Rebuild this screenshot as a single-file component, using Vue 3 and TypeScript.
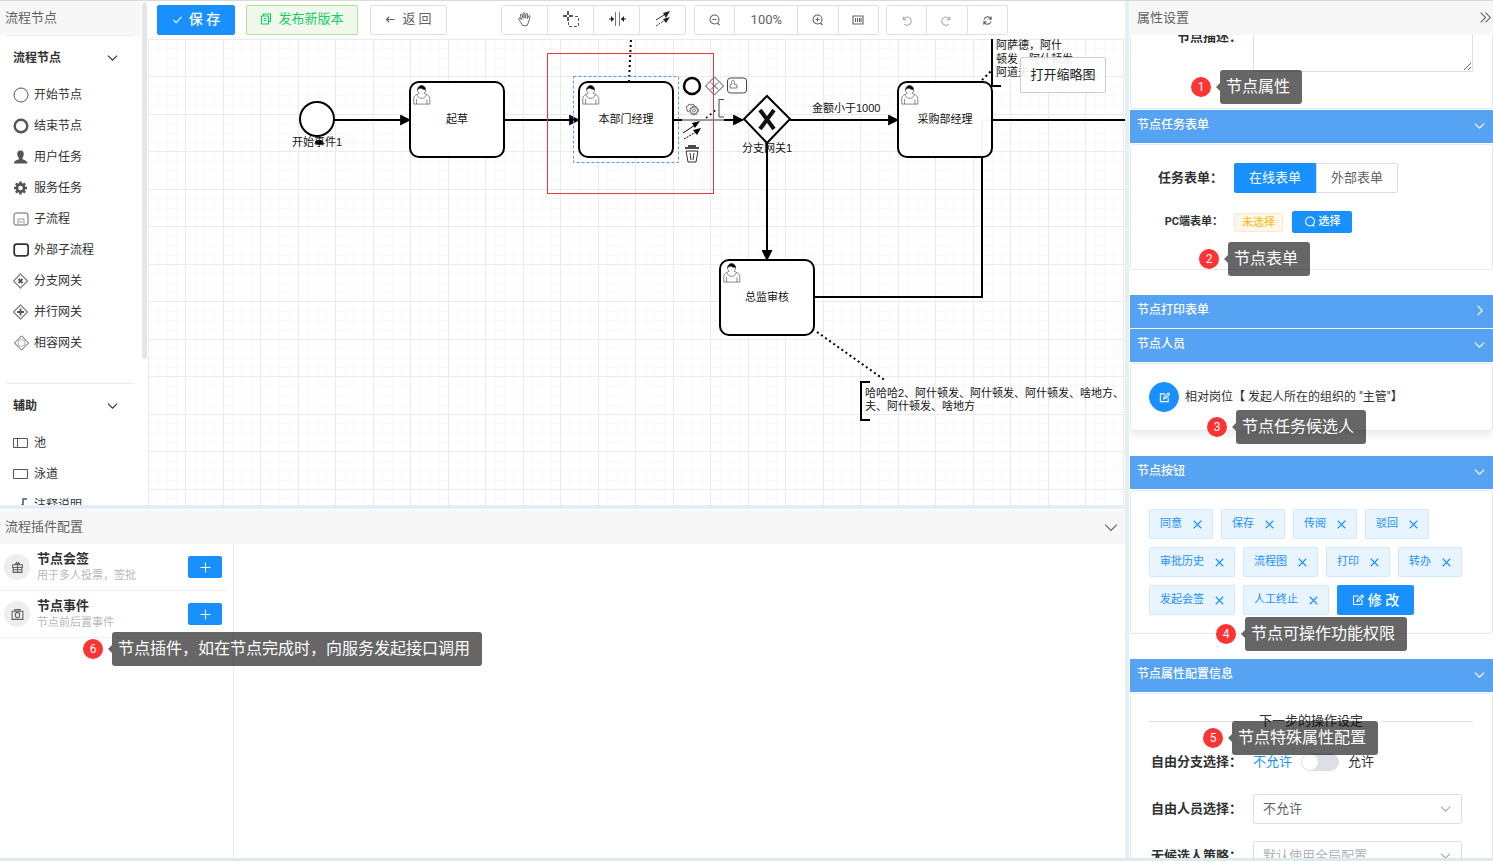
<script setup lang="ts">
import { h, onMounted, ref } from 'vue'

interface IconProps { name: string; size?: number }

// Outline icons on a 24 unit grid
const iconPaths: Record<string, string> = {
  check: 'M3 13l6 6L21 6',
  copy: 'M7 6V2h14v15h-4M3 6h14v16H3zM7 11h6M7 15h6',
  back: 'M21 12H3M9 6l-6 6 6 6',
  down: 'M2 8l10 10 10-10',
  right: 'M8 2l10 10-10 10',
  doubleRight: 'M3 3l9 9-9 9M12 3l9 9-9 9',
  zoomOut: 'M20 11a9 9 0 1 1-18 0a9 9 0 1 1 18 0M17 18l4 4M7 11h8',
  zoomIn: 'M20 11a9 9 0 1 1-18 0a9 9 0 1 1 18 0M17 18l4 4M7 11h8M11 7v8',
  fit: 'M2 4h20v16H2zM7 8v8M11 8v8M15 8v8M18 8v8',
  undo: 'M5 4v6h6M5 10a9 9 0 1 1 2 10',
  redo: 'M19 4v6h-6M19 10a9 9 0 1 0-2 10',
  refresh: 'M4 10a9 9 0 0 1 16-2M20 3v6h-6M20 14a9 9 0 0 1-16 2M4 21v-6h6',
  search: 'M21 11a9 9 0 1 1-18 0a9 9 0 1 1 18 0M17 18l4 3',
  edit: 'M13 4H3v17h17V12M10 15l1-4 9-9 3 3-9 9z',
  close: 'M2 2l20 20M22 2L2 22',
  plus: 'M12 1v22M1 12h22',
  gift: 'M3 7h18v5H3zM4 12v9h16v-9M12 7v14M4 16h16M7 7l3-4 2 4 2-4 3 4',
  camera: 'M2 6h20v15H2zM7 6V3h10v3M16 13a4 5 0 1 1-8 0a4 5 0 1 1 8 0',
}

const Icon = (props: IconProps) =>
  h('svg', {
    viewBox: '0 0 24 24', width: props.size ?? 12, height: props.size ?? 12,
    fill: 'none', stroke: 'currentColor', 'stroke-width': 26 / (props.size ?? 12), 'aria-hidden': 'true',
  }, [h('path', { d: iconPaths[props.name] })])
Icon.props = ['name', 'size']

const nodeItems = [
  { kind: 'start', text: '开始节点' },
  { kind: 'end', text: '结束节点' },
  { kind: 'user', text: '用户任务' },
  { kind: 'service', text: '服务任务' },
  { kind: 'sub', text: '子流程' },
  { kind: 'call', text: '外部子流程' },
  { kind: 'xor', text: '分支网关' },
  { kind: 'and', text: '并行网关' },
  { kind: 'or', text: '相容网关' },
]
const helperItems = [
  { kind: 'pool', text: '池' },
  { kind: 'lane', text: '泳道' },
  { kind: 'note', text: '注释说明' },
]
const groups = [
  { title: '流程节点', items: nodeItems },
  { title: '辅助', items: helperItems },
]

const tasks = [
  { x: 410, y: 82, text: '起草' },
  { x: 579, y: 82, text: '本部门经理' },
  { x: 898, y: 82, text: '采购部经理' },
  { x: 720, y: 260, text: '总监审核' },
]

const plugins = [
  { icon: 'gift', title: '节点会签', desc: '用于多人投票，签批' },
  { icon: 'camera', title: '节点事件', desc: '节点前后置事件' },
]

const actions = ['同意', '保存', '传阅', '驳回', '审批历史', '流程图', '打印', '转办', '发起会签', '人工终止']

interface Note { no: number; text: string; left: number; top: number }
const panelNotes: Note[] = [
  { no: 1, text: '节点属性', left: 61, top: 69 },
  { no: 2, text: '节点表单', left: 69, top: 241 },
  { no: 3, text: '节点任务候选人', left: 77, top: 409 },
  { no: 4, text: '节点可操作功能权限', left: 86, top: 616 },
  { no: 5, text: '节点特殊属性配置', left: 73, top: 720 },
]

const formType = ref('online')
const freeBranch = ref(false)
const freeUser = ref('不允许')
const fallback = ref('默认使用全局配置')
const description = ref('')

const panelScroll = ref<HTMLElement | null>(null)
onMounted(() => {
  if (panelScroll.value) panelScroll.value.scrollTop = 32
})
</script>

<template>
  <div class="page">
    <div class="main">
      <div class="left">
        <div class="designer">
          <nav class="palette">
            <h2 class="bar">流程节点</h2>
            <div class="thumb"></div>
            <section v-for="g in groups" :key="g.title" class="group">
              <h3>{{ g.title }}<Icon name="down" :size="11" /></h3>
              <ul>
                <li v-for="it in g.items" :key="it.text">
                  <svg class="shape" width="16" height="16" viewBox="0 0 16 16" fill="none" stroke="#555">
                    <circle v-if="it.kind === 'start'" cx="8" cy="8" r="7" />
                    <circle v-else-if="it.kind === 'end'" cx="8" cy="8" r="6.3" stroke-width="2.4" />
                    <path v-else-if="it.kind === 'user'" stroke="none" fill="#555" d="M7.5 1.500c2.600 0 3.600 2 3.200 4.500-.2 1.500-.9 2.300-1.200 2.900v1.400c2.200.8 4.800 1.500 5 4.200H.9c.2-2.700 2.800-3.400 5-4.200V8.900C5.300 8.300 4.500 7.500 4.300 6 3.900 3.500 5 1.500 7.500 1.500z" />
                    <g v-else-if="it.kind === 'service'">
                      <circle cx="7.500" cy="8" r="3.600" stroke-width="2.600" />
                      <path stroke-width="2.600" d="M7.500 1.500v2.500M7.500 12v2.500M1 8h2.500M11.500 8h2.500M2.900 3.400l1.800 1.800M10.300 10.800l1.800 1.800M2.900 12.600l1.800-1.800M10.300 5.200l1.800-1.800" />
                    </g>
                    <g v-else-if="it.kind === 'sub'">
                      <rect x="1" y="2" width="14" height="12" rx="2" stroke="#6a5a7a" />
                      <path d="M5 13V8h6v5M6 11h4" stroke="#999" />
                    </g>
                    <rect v-else-if="it.kind === 'call'" x="1.200" y="2.200" width="14" height="11.600" rx="2.500" stroke="#333" stroke-width="1.800" />
                    <g v-else-if="it.kind === 'xor'">
                      <path d="M7.500 1l7 7-7 7-7-7z" stroke="#888" stroke-width="1.400" /><path d="M5.500 6l4 4M9.500 6l-4 4" stroke-width="2" />
                    </g>
                    <g v-else-if="it.kind === 'and'">
                      <path d="M7.500 1l7 7-7 7-7-7z" stroke="#888" stroke-width="1.400" /><path d="M7.500 4.500v7M4 8h7" stroke-width="1.800" />
                    </g>
                    <g v-else-if="it.kind === 'or'">
                      <path d="M8.500 .8l7 7.200-7 7.200L1.500 8z" /><circle cx="8.500" cy="8" r="3.500" stroke="#aaa" />
                    </g>
                    <path v-else-if="it.kind === 'pool'" d="M.5 3.500h14v9H.5zM4.500 3.500v9" />
                    <path v-else-if="it.kind === 'lane'" d="M.5 3.500h14v9H.5z" />
                    <path v-else d="M14 2h-4v12M10 7l-7 7" stroke-width="1.500" />
                  </svg>
                  {{ it.text }}
                </li>
              </ul>
            </section>
          </nav>

          <div class="work">
            <div class="toolbar">
              <button class="btn primary save"><Icon name="check" :size="11" />保 存</button>
              <button class="btn publish"><Icon name="copy" />发布新版本</button>
              <button class="btn return"><Icon name="back" :size="11" />返 回</button>
              <div class="btn-group tools">
                <button aria-label="抓手">
                  <svg width="16" height="16" viewBox="0 0 18 18" fill="none" stroke="#555"><path d="M6.500 16.500C5 14 3 11 1.800 8.700c-.3-1 .8-1.600 1.600-.8L5.200 10 3.800 4.600c-.2-1.200 1.300-1.500 1.700-.4L7 8.200 6.800 2.700c0-1.300 1.600-1.300 1.800 0L9.200 8l1-4.700c.3-1.200 1.800-.9 1.700.3L11.500 8.600l1.600-3c.6-1 1.900-.3 1.500.7-.8 2.300-.8 5-1.800 7-.5 1-1.200 1.700-1.500 3.200z" /></svg>
                </button>
                <button aria-label="框选">
                  <svg width="18" height="18" viewBox="0 0 18 18" fill="none" stroke="#555"><path d="M6 1v4M6 7v4M1 6h4M7 6h4" stroke="#222" stroke-width="1.500" /><path d="M6.500 12v4.500h10V6.500H12" stroke-dasharray="3 2" /></svg>
                </button>
                <button aria-label="间距">
                  <svg width="18" height="18" viewBox="0 0 18 18" fill="none" stroke="#777"><path d="M7.500 2v14M11.500 2v14" /><path d="M1 9h5M13 9h5" stroke="#222" /><path d="M3 6l3 3-3 3zM16 6l-3 3 3 3z" fill="#222" stroke="none" /></svg>
                </button>
                <button aria-label="连线">
                  <svg width="18" height="18" viewBox="0 0 18 18" fill="none" stroke="#333"><path d="M2 10l8-5" /><path d="M2 16l9-6" stroke-dasharray="2 1" /><path d="M16 1L9 3l3 5zM16 7l-7 2 3 4z" fill="#222" stroke="none" /></svg>
                </button>
              </div>
              <div class="btn-group zoom">
                <button aria-label="缩小"><Icon name="zoomOut" /></button>
                <button class="percent">100%</button>
                <button aria-label="放大"><Icon name="zoomIn" /></button>
                <button aria-label="适应"><Icon name="fit" /></button>
              </div>
              <div class="btn-group history">
                <button aria-label="撤销" class="muted"><Icon name="undo" :size="11" /></button>
                <button aria-label="重做" class="muted"><Icon name="redo" :size="11" /></button>
                <button aria-label="重置"><Icon name="refresh" :size="11" /></button>
              </div>
            </div>

            <div class="canvas">
              <svg class="diagram" width="100%" height="100%">
                <defs>
                  <pattern id="grid" width="75" height="75" patternUnits="userSpaceOnUse">
                    <path d="M9 0h1v75h-1zM19 0h1v75h-1zM28 0h1v75h-1zM47 0h1v75h-1zM56 0h1v75h-1zM66 0h1v75h-1zM0 9h75v1H0zM0 19h75v1H0zM0 28h75v1H0zM0 47h75v1H0zM0 56h75v1H0zM0 66h75v1H0z" fill="#f8f8f8" />
                    <path d="M0 0h1v75H0zM37 0h1v75h-1zM0 0h75v1H0zM0 37h75v1H0z" fill="#ebebeb" />
                  </pattern>
                  <marker id="arrow" viewBox="0 0 10 10" refX="9" refY="5" markerWidth="11" markerHeight="11" markerUnits="userSpaceOnUse" orient="auto"><path d="M0 0l10 5-10 5z" /></marker>
                </defs>
                <rect width="100%" height="100%" fill="url(#grid)" />
                <g transform="translate(-148 -39)">
                  <g class="edge">
                    <path d="M334 120H410" marker-end="url(#arrow)" />
                    <path d="M504 120H579" marker-end="url(#arrow)" />
                    <path d="M673 120H682" />
                    <path d="M682 120H724" class="faded" />
                    <path d="M724 120H743" marker-end="url(#arrow)" />
                    <path d="M790 120H898" marker-end="url(#arrow)" />
                    <path d="M767 143V260" marker-end="url(#arrow)" />
                    <path d="M814 297H982V158" />
                    <path d="M992 120H2400" />
                  </g>
                  <g class="dots">
                    <path d="M629 82L631 38" /><path d="M982 80L991 71" /><path d="M817 332L886 381" />
                  </g>
                  <circle cx="317" cy="119" r="17" class="node" />
                  <text x="317" y="146" text-anchor="middle">开始事件1</text>
                  <ellipse cx="319" cy="142" rx="4" ry="2" />

                  <g v-for="t in tasks" :key="t.text" :transform="`translate(${t.x} ${t.y})`">
                    <rect width="94" height="75" rx="9" class="node" />
                    <text x="47" y="41" text-anchor="middle">{{ t.text }}</text>
                    <g transform="scale(.94)" class="person">
                      <path d="m15,12c0.909,-0.845 1.594,-2.049 1.594,-3.385 0,-2.554 -1.805,-4.622 -4.357,-4.622 -2.552,0 -4.288,2.068 -4.288,4.622 0,1.348 0.974,2.562 1.896,3.405 -0.529,0.187 -5.669,2.097 -5.794,4.756v6.718h17v-6.718c0,-2.298 -5.528,-4.595 -6.051,-4.776zm-8,6l0,5.500m11,0l0,-5" />
                      <path d="m15,12m2.162,1.009c0,2.447 -2.158,4.431 -4.821,4.431 -2.665,0 -4.822,-1.981 -4.822,-4.431" />
                      <path class="hair" d="m15,12m-6.900,-3.800c0,0 2.251,-2.358 4.274,-1.177 2.024,1.181 4.221,1.537 4.124,0.965 -0.098,-0.570 -0.117,-3.791 -4.191,-4.136 -3.572,0.001 -4.208,4.240 -4.208,4.348z" />
                    </g>
                  </g>
                  <path d="M982 156V120H991" stroke="#eee" fill="none" />

                  <path d="M767 96l23 23-23 24-23-24z" class="node" />
                  <path d="M760 110l14 19M774 110l-14 19" stroke="#111" stroke-width="4" />
                  <text x="767" y="152" text-anchor="middle">分支网关1</text>
                  <text x="812" y="112">金额小于1000</text>

                  <path d="M992 38V86H1001" class="bracket" />
                  <text x="996" y="49">阿萨德，阿什</text>
                  <text x="996" y="63">顿发，阿什顿发</text>
                  <text x="996" y="76">阿道夫</text>
                  <path d="M870 382H861V420H870" class="bracket" />
                  <text x="865" y="397">哈哈哈2、阿什顿发、阿什顿发、阿什顿发、啥地方、</text>
                  <text x="865" y="410">夫、阿什顿发、啥地方</text>

                  <rect x="573.500" y="76.500" width="105" height="86" class="selection" />
                  <g class="pad">
                    <circle cx="692" cy="86" r="8" stroke="#000" stroke-width="2.500" fill="#fff" />
                    <path d="M714.500 77l9 9-9 9-9-9zM711 82.500l7 7M718 82.500l-7 7" fill="none" />
                    <rect x="727.500" y="78" width="19" height="15" rx="3" fill="#fff" />
                    <path d="M730 88v-3l2-1c-2-5 4-5 2 0l3 1v3z" stroke-width=".7" />
                    <path d="M724 99.500h-5V117h5" /><path d="M706 118l11-9" stroke="#000" stroke-width="1.500" stroke-dasharray="2 3" />
                    <circle cx="694" cy="110.500" r="4.300" stroke-dasharray="2 1" /><circle cx="694" cy="110.500" r="3.500" stroke-width=".7" /><circle cx="694" cy="110.500" r="1.500" stroke-width=".7" />
                    <path d="M689 112l-2-1v-2l-1-2 2-1 1-2 2 1 2-1 2 2" stroke-width=".8" />
                    <path d="M683 133l12-8" stroke="#000" /><path d="M684 139l12-7" stroke="#000" stroke-dasharray="2 1" />
                    <path d="M700 121l-8 2 3 5zM701 128l-8 2 4 5z" fill="#000" stroke="none" />
                    <path d="M686 151h12l-2 11h-8zM690 153l1 7M694 153l-1 7" stroke="#333" />
                    <path d="M685 148h14M688 146h8" stroke="#111" stroke-width="1.500" />
                  </g>
                  <rect x="547.500" y="53.500" width="166" height="140" fill="none" stroke="#e5393e" />
                </g>
              </svg>
              <button class="minimap">打开缩略图</button>
            </div>
          </div>
        </div>

        <div class="split-h"></div>

        <section class="plugins">
          <h2 class="bar">流程插件配置<Icon name="down" :size="14" /></h2>
          <ul class="plugin-list">
            <li v-for="p in plugins" :key="p.title">
              <span class="avatar"><Icon :name="p.icon" :size="13" /></span>
              <div class="info"><strong>{{ p.title }}</strong><small>{{ p.desc }}</small></div>
              <button class="btn primary add" :aria-label="`添加${p.title}`"><Icon name="plus" :size="11" /></button>
            </li>
          </ul>
          <div class="note plugin-note"><b>6</b><span>节点插件，如在节点完成时，向服务发起接口调用</span></div>
        </section>
      </div>

      <div class="split-v"></div>

      <aside class="panel">
        <h2 class="bar">属性设置<Icon name="doubleRight" :size="13" /></h2>
        <div ref="panelScroll" class="scroll">
          <div class="card">
            <div class="row wide top">
              <label for="desc">节点描述：</label>
              <textarea id="desc" v-model="description"></textarea>
            </div>
          </div>

          <h3 class="head">节点任务表单<Icon name="down" :size="11" /></h3>
          <div class="card forms">
            <div class="row" role="radiogroup" aria-labelledby="form-type">
              <span id="form-type" class="label">任务表单：</span>
              <div class="radios">
                <input id="online" v-model="formType" type="radio" name="form" value="online" /><label for="online">在线表单</label>
                <input id="outer" v-model="formType" type="radio" name="form" value="outer" /><label for="outer">外部表单</label>
              </div>
            </div>
            <div class="row small">
              <span class="label">PC端表单：</span>
              <span class="warn">未选择</span>
              <button class="btn primary pick"><Icon name="search" />选择</button>
            </div>
          </div>

          <h3 class="head">节点打印表单<Icon name="right" :size="11" /></h3>
          <h3 class="head">节点人员<Icon name="down" :size="11" /></h3>
          <div class="card shadow person-row">
            <button class="btn primary round" aria-label="编辑人员"><Icon name="edit" :size="11" /></button>
            <span>相对岗位【 发起人所在的组织的 "主管"】</span>
          </div>

          <h3 class="head">节点按钮<Icon name="down" :size="11" /></h3>
          <div class="card tags">
            <span v-for="a in actions" :key="a" class="tag">{{ a }}<button :aria-label="`移除${a}`"><Icon name="close" :size="9" /></button></span>
            <button class="btn primary modify"><Icon name="edit" />修 改</button>
          </div>

          <h3 class="head">节点属性配置信息<Icon name="down" :size="11" /></h3>
          <div class="card config">
            <div class="divider">下一步的操作设定</div>
            <div class="row wide">
              <label for="branch">自由分支选择：</label>
              <div class="switch">
                <span :class="{ on: !freeBranch }">不允许</span>
                <input id="branch" v-model="freeBranch" type="checkbox" role="switch" />
                <span :class="{ on: freeBranch }">允许</span>
              </div>
            </div>
            <div class="row wide">
              <label for="free-user">自由人员选择：</label>
              <div class="select">
                <select id="free-user" v-model="freeUser"><option>不允许</option></select>
                <Icon name="down" :size="11" />
              </div>
            </div>
            <div class="row wide">
              <label for="fallback">无候选人策略：</label>
              <div class="select placeholder">
                <select id="fallback" v-model="fallback"><option>默认使用全局配置</option></select>
                <Icon name="down" :size="11" />
              </div>
            </div>
          </div>
        </div>
        <div v-for="n in panelNotes" :key="n.no" class="note" :style="{ left: n.left + 'px', top: n.top + 'px' }">
          <b>{{ n.no }}</b><span>{{ n.text }}</span>
        </div>
      </aside>
    </div>
    <div class="foot"></div>
  </div>
</template>

<style>
body { margin: 0; overflow: hidden; }
</style>

<style scoped>
* { box-sizing: border-box; }
.page { height: 100vh; display: flex; flex-direction: column; background: #fff; color: #303133; font: 13px/18px Roboto, "Noto Sans CJK SC", sans-serif; border-top: 1px solid #d9d9d9; }
.main { flex: 1; min-height: 0; display: flex; }
.left { flex: 1; min-width: 0; display: flex; flex-direction: column; }
.foot { height: 3px; background: #dcebea; }
.split-v { width: 4px; margin-right: 1px; background: #e5edf5; }
.split-h { height: 4px; background: #e5eef6; }
button, input, select, textarea { font: inherit; color: inherit; margin: 0; }
button { cursor: pointer; }
svg { flex: none; }
h2, h3, ul { margin: 0; padding: 0; font: inherit; list-style: none; }
.bar { display: flex; align-items: center; justify-content: space-between; height: 34px; flex: none; padding: 0 1px 1px 5px; background: #f7f7f7; color: #606266; font-size: 13px; }

.designer { flex: 504 1 0; min-height: 0; display: flex; }
.palette { position: relative; width: 148px; overflow: hidden; padding-right: 7px; }
.thumb { position: absolute; right: 1px; top: 1px; width: 5px; height: 357px; border-radius: 3px; background: #e6e6e6; }
.group { margin: 0 7px 25px 6px; border-top: 1px solid #e8eaf2; }
.group h3 { display: flex; align-items: center; justify-content: space-between; height: 43px; padding: 0 16px 0 7px; font-size: 12px; font-weight: 700; }
.group li { display: flex; align-items: center; gap: 5px; height: 31px; padding-left: 7px; font-size: 12px; white-space: nowrap; }

.work { flex: 1; min-width: 0; display: flex; flex-direction: column; }
.toolbar { display: flex; height: 38px; padding: 4px 0 0 9px; }
.btn { display: flex; align-items: center; justify-content: center; gap: 6px; height: 30px; padding: 0; border: 1px solid #dcdfe6; border-radius: 2px; background: #fff; color: #606266; white-space: nowrap; }
.btn.primary { background: #1890ff; border-color: #1890ff; color: #fff; }
.toolbar .btn { padding-bottom: 2px; }
.save { width: 78px; font-size: 14px; font-weight: 500; margin-right: 11px; }
.publish { width: 112px; margin-right: 12px; background: #f0f9eb; border-color: #b3e19d; color: #13ce66; }
.return { width: 77px; margin-right: 54px; }
.btn-group { display: flex; height: 30px; margin-right: 8px; border: 1px solid #dcdfe6; border-radius: 2px; }
.btn-group button { display: flex; align-items: center; justify-content: center; flex: 1; padding: 0; border: 0; background: #fff; color: #606266; }
.btn-group button + button { border-left: 1px solid #dcdfe6; }
.tools button { padding-bottom: 3px; }
.tools, .zoom { width: 185px; }
.btn-group.zoom { margin-right: 7px; }
.history { width: 122px; }
.btn-group .percent { flex: none; width: 63px; }
.btn-group .muted { color: #a8abb2; }

.canvas { position: relative; flex: 1; min-height: 0; overflow: hidden; }
.diagram { display: block; }
.diagram text { font: 11px "Liberation Sans", "Noto Sans CJK SC", sans-serif; fill: #111; }
.node { fill: #fff; stroke: #000; stroke-width: 2; }
.edge { fill: none; stroke: #000; stroke-width: 2; }
.faded { stroke: #999; }
.dots { fill: none; stroke: #000; stroke-width: 2; stroke-dasharray: 2 3; }
.bracket { fill: none; stroke: #000; stroke-width: 2; }
.person { fill: #fff; stroke: #333; stroke-width: .6; }
.hair { fill: #000; }
.selection { fill: none; stroke: #5c9bf5; stroke-dasharray: 3 2; }
.pad { fill: none; stroke: #444; }
.minimap { position: absolute; right: 19px; top: 18px; width: 86px; height: 36px; padding: 0; border: 1px solid #ccc; border-radius: 2px; background: rgba(255, 255, 255, .9); color: #222; }

.plugins { position: relative; flex: 348 1 0; min-height: 0; display: flex; flex-direction: column; margin-top: 1px; }
.plugins .bar { padding: 0 7px 1px 5px; }
.plugin-list { width: 234px; flex: 1; border-right: 1px solid #ebebeb; }
.plugin-list li { display: flex; align-items: center; height: 47px; margin-right: 7px; padding: 0 4px; border-bottom: 1px solid #f2f2f2; }
.avatar { display: flex; align-items: center; justify-content: center; width: 26px; height: 26px; border-radius: 50%; background: #eee; color: #606266; }
.info { flex: 1; padding-left: 7px; }
.info strong, .info small { display: block; line-height: 17px; }
.info small { font-size: 11px; color: #b8b8b8; }
.add { width: 34px; height: 22px; }

.note { position: absolute; display: flex; align-items: center; gap: 9px; white-space: nowrap; color: #fff; }
.note b { width: 20px; height: 20px; border-radius: 50%; background: #fc3434; font-size: 12px; line-height: 20px; font-weight: 400; text-align: center; }
.note span { position: relative; height: 34px; padding: 0 12px 0 6px; border-radius: 3px; background: rgba(0, 0, 0, .6); font-size: 16px; line-height: 34px; }
.note span::before { content: ""; position: absolute; left: -4px; top: 13px; border: 4px solid transparent; border-left: 0; border-right-color: #666; }
.plugin-note { left: 83px; top: 122px; }

.panel { position: relative; width: 363px; display: flex; flex-direction: column; }
.panel .bar { padding-left: 7px; }
.scroll { flex: 1; min-height: 0; overflow: hidden; }
.head { display: flex; align-items: center; justify-content: space-between; height: 33px; margin-bottom: 1px; padding: 0 8px 3px 7px; background: #57a3f3; color: #fff; font-size: 12px; font-weight: 500; }
.card { margin-bottom: 25px; padding: 18px 19px 18px 18px; border: 1px solid #e4e7ed; border-radius: 3px; }
.card:first-child { margin-bottom: 1px; padding-bottom: 36px; }
.forms { padding-bottom: 36px; }
.shadow { box-shadow: 0 4px 8px rgba(0, 0, 0, .08); }
.row { display: flex; align-items: center; min-height: 30px; }
.row > label, .label { width: 74px; margin-right: 11px; flex: none; font-weight: 700; text-align: right; white-space: nowrap; }
.row.wide > label { width: 93px; }
.row.top { align-items: flex-start; }
.row.top > label { line-height: 30px; }
.row textarea { flex: 1; min-width: 0; height: 50px; border: 1px solid #dcdfe6; border-radius: 2px; background: #fff; }
.row.small { margin-top: 18px; min-height: 22px; font-size: 11px; }
.radios { display: flex; height: 30px; }
.radios input { position: absolute; opacity: 0; width: 1px; height: 1px; }
.radios label { width: 82px; border: 1px solid #dcdfe6; border-radius: 0 2px 2px 0; line-height: 28px; text-align: center; color: #606266; }
.radios input:checked + label { background: #1890ff; border-color: #1890ff; border-radius: 2px 0 0 2px; color: #fff; }
.warn { width: 49px; height: 19px; margin-right: 9px; border: 1px solid #ffe8cc; border-radius: 2px; background: #fff6ec; color: #ffba00; line-height: 17px; text-align: center; }
.pick { width: 60px; height: 22px; gap: 3px; font-weight: 500; }
.person-row { display: flex; align-items: center; gap: 6px; font-size: 12px; white-space: nowrap; }
.round { width: 30px; border-radius: 50%; flex: none; }
.tags { display: flex; flex-wrap: wrap; gap: 8px; }
.tag { display: flex; align-items: center; gap: 11px; height: 30px; padding: 0 10px; border: 1px solid #d1e9ff; border-radius: 2px; background: #e8f4ff; color: #1890ff; font-size: 11px; }
.tag button { display: flex; padding: 0; border: 0; background: none; }
.modify { width: 77px; font-size: 14px; font-weight: 500; gap: 4px; }
.config { display: flex; flex-direction: column; gap: 17px; }
.divider { display: flex; align-items: center; gap: 19px; height: 18px; white-space: nowrap; }
.divider::before, .divider::after { content: ""; flex: 1; height: 1px; background: #dcdfe6; }
.switch { display: flex; align-items: center; gap: 9px; }
.switch .on { color: #1890ff; }
.switch input { appearance: none; width: 38px; height: 18px; border-radius: 9px; background: #dcdfe6; }
.switch input::before { content: ""; display: block; width: 16px; height: 16px; margin: 1px; border-radius: 50%; background: #fff; }
.switch input:checked::before { margin-left: 21px; }
.select { position: relative; flex: 1; margin-right: 11px; color: #606266; }
.select select { appearance: none; display: block; width: 100%; height: 30px; padding: 0 30px 0 9px; border: 1px solid #dcdfe6; border-radius: 2px; background: #fff; }
.select svg { position: absolute; right: 11px; top: 9px; color: #a8abb2; pointer-events: none; }
.select.placeholder { color: #b0b3ba; }
</style>
